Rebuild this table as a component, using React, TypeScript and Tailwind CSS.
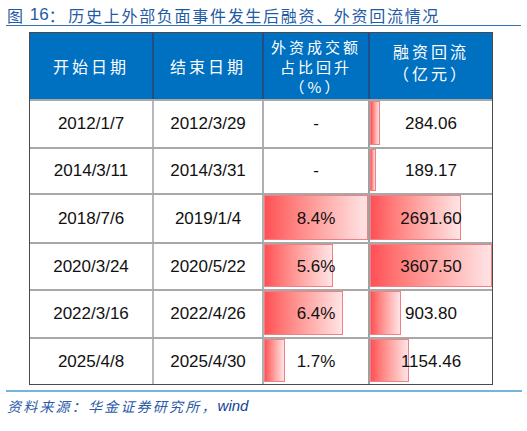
import React from "react";

type Row = {
  start: string;
  end: string;
  pct: string;
  pctVal: number;
  flow: string;
  flowVal: number;
  h: string;
};

const rows: Row[] = [
  { start: "2012/1/7", end: "2012/3/29", pct: "-", pctVal: 0, flow: "284.06", flowVal: 284.06, h: "h-[48px]" },
  { start: "2014/3/11", end: "2014/3/31", pct: "-", pctVal: 0, flow: "189.17", flowVal: 189.17, h: "h-[46px]" },
  { start: "2018/7/6", end: "2019/1/4", pct: "8.4%", pctVal: 8.4, flow: "2691.60", flowVal: 2691.6, h: "h-[49px]" },
  { start: "2020/3/24", end: "2020/5/22", pct: "5.6%", pctVal: 5.6, flow: "3607.50", flowVal: 3607.5, h: "h-[47px]" },
  { start: "2022/3/16", end: "2022/4/26", pct: "6.4%", pctVal: 6.4, flow: "903.80", flowVal: 903.8, h: "h-[48px]" },
  { start: "2025/4/8", end: "2025/4/30", pct: "1.7%", pctVal: 1.7, flow: "1154.46", flowVal: 1154.46, h: "h-[47px]" },
];

const cjk = { fontFamily: '"Noto Sans CJK SC", "Noto Sans", sans-serif' };
const arial = { fontFamily: '"Liberation Sans", Arial, sans-serif' };

function Bar({ width }: { width: number }) {
  if (width <= 0) return null;
  return (
    <div
      className="absolute left-0 top-0 bottom-[2px] border border-[#f07f86] bg-linear-to-r from-[#ff4f55] to-[#ffe4e6]"
      style={{ width }}
    />
  );
}

export default function App() {
  return (
    <div className="w-[527px] h-[431px] bg-white relative overflow-hidden">
      {/* Title */}
      <div className="pl-[7px] pt-[4px] h-[25px] flex items-center text-[#1f5aa6] text-[16px] leading-none tracking-[1.7px]" style={cjk}>
        <span>图</span>
        <span className="ml-[5px] text-[17px] tracking-normal" style={arial}>16</span>
        <span className="mr-[2px]">：</span>
        <span>历史上外部负面事件发生后融资、外资回流情况</span>
      </div>
      <div className="ml-[6px] w-[515px] h-[1px] bg-[#2f74b8]" />

      {/* Table */}
      <div className="ml-[29px] mt-[6px] w-[464px] border border-[#4a4a4a]">
        {/* Header */}
        <div className="grid grid-cols-[122px_110px_106px_124px] h-[66px] bg-[#0070c0] text-white text-[16px] tracking-[3px]" style={cjk}>
          <div className="flex items-center justify-center">开始日期</div>
          <div className="flex items-center justify-center border-l-2 border-[#1f4f86]">结束日期</div>
          <div className="flex flex-col items-center justify-center border-l-2 border-[#1f4f86] text-[15px] leading-[20px] pt-[2px]">
            <span>外资成交额</span>
            <span>占比回升</span>
            <span>（%）</span>
          </div>
          <div className="flex flex-col items-center justify-center border-l-2 border-[#1f4f86] leading-[22px] pb-[8px]">
            <span>融资回流</span>
            <span>（亿元）</span>
          </div>
        </div>

        {rows.map((r, i) => (
          <div
            key={i}
            className={`grid grid-cols-[122px_110px_106px_124px] ${r.h} border-t-2 border-[#a8a8a8] text-[17px] text-[#111]`}
            style={arial}
          >
            <div className="flex items-center justify-center">{r.start}</div>
            <div className="flex items-center justify-center border-l-2 border-[#b8b8b8]">{r.end}</div>
            <div className="relative flex items-center justify-center border-l-2 border-[#b0b0b0]">
              <Bar width={(r.pctVal / 8.4) * 104} />
              <span className="relative">{r.pct}</span>
            </div>
            <div className="relative flex items-center justify-center border-l-2 border-[#a0a0a0]">
              <Bar width={(r.flowVal / 3607.5) * 122} />
              <span className="relative">{r.flow}</span>
            </div>
          </div>
        ))}
      </div>

      {/* Source line */}
      <div className="ml-[6px] mt-[5px] w-[516px] h-[2px] bg-[#78b2df]" />
      <div className="pl-[7px] mt-[6px] flex items-center italic text-[14px] leading-none text-[#2a5aa8] tracking-[2.2px]" style={cjk}>
        <span>资料来源：华金证券研究所，</span>
        <span className="tracking-normal text-[#0d3f96] text-[15px]" style={arial}>wind</span>
      </div>
    </div>
  );
}
